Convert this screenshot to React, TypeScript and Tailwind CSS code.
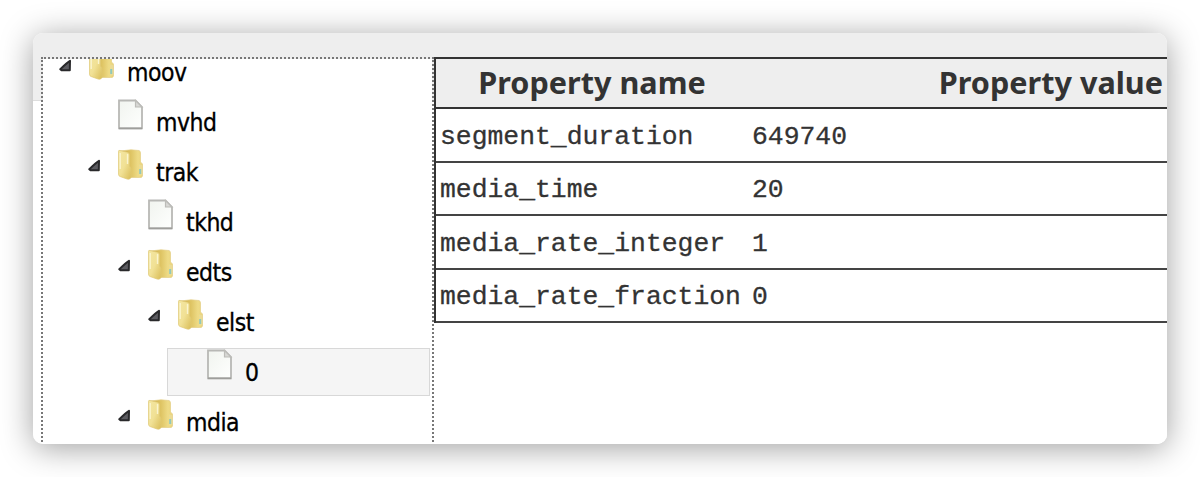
type Node = { name: string; indent: string; kind: 'folder' | 'file'; selected?: boolean };

const nodes: Node[] = [
  { name: 'moov', indent: 'pl-[16px]', kind: 'folder' },
  { name: 'mvhd', indent: 'pl-[45px]', kind: 'file' },
  { name: 'trak', indent: 'pl-[45px]', kind: 'folder' },
  { name: 'tkhd', indent: 'pl-[75px]', kind: 'file' },
  { name: 'edts', indent: 'pl-[75px]', kind: 'folder' },
  { name: 'elst', indent: 'pl-[105px]', kind: 'folder' },
  { name: '0', indent: 'pl-[9px]', kind: 'file', selected: true },
  { name: 'mdia', indent: 'pl-[75px]', kind: 'folder' },
];

const properties = [
  { name: 'segment_duration', value: '649740' },
  { name: 'media_time', value: '20' },
  { name: 'media_rate_integer', value: '1' },
  { name: 'media_rate_fraction', value: '0' },
];

function Arrow() {
  return (
    <svg width="13" height="13" viewBox="0 0 13 13" className="mt-[10px] shrink-0">
      <path d="M11 1.8Q8 3.5 1.3 10.2L2.5 11.2H10.8Z" fill="#5c5c61" stroke="#29292b" strokeWidth="2" strokeLinejoin="round" />
    </svg>
  );
}

function Folder() {
  return (
    <svg width="27" height="31" viewBox="0 0 27 31" className="shrink-0">
      <defs>
        <linearGradient id="front" x1="0" x2="1" y2="1">
          <stop offset="0" stopColor="#f3e6a2" />
          <stop offset=".5" stopColor="#f1e195" />
          <stop offset="1" stopColor="#d9bd58" />
        </linearGradient>
        <linearGradient id="back" x2="1">
          <stop offset="0" stopColor="#c8a842" />
          <stop offset=".5" stopColor="#dfc565" />
          <stop offset=".8" stopColor="#eedb86" />
          <stop offset="1" stopColor="#e9d37b" />
        </linearGradient>
      </defs>
      <path d="M3 2 14 .8 22 1.5Q23.5 2 23.5 4V13L25.5 15V27Q25 29 22.5 28.5L12 28.5Z" fill="url(#back)" stroke="#e4cf85" strokeWidth=".7" />
      <path d="M22 15.5 25 16V26L22 27Z" fill="#eadb95" />
      <path d="M23.2 20V25" stroke="#91c9bb" strokeWidth="2" />
      <path d="M1.5 2.2Q1.5 1 3 1.5L10.5 3.3Q12.5 4 12.5 6V17L14 19V28.5Q13 31 10 30L3 27.5Q1.5 27 1.5 25Z" fill="url(#front)" stroke="#dfc976" strokeWidth=".7" />
      <path d="M3.2 4V20M10.5 5V15" stroke="#faf4ce" strokeWidth="1.4" />
    </svg>
  );
}

function FileIcon() {
  return (
    <svg width="27" height="31" viewBox="0 0 27 31" className="shrink-0">
      <defs>
        <linearGradient id="sheet" x2="1" y2="1">
          <stop offset="0" stopColor="#f1f4ef" />
          <stop offset="1" stopColor="#fefffe" />
        </linearGradient>
      </defs>
      <path d="M2 1.5H18.5L25 8V29.3H2Z" fill="url(#sheet)" stroke="#b8b8b5" strokeWidth="1.8" />
      <path d="M2 29.3H25" stroke="#9e9e9b" strokeWidth="1.7" />
      <path d="M18.5 1.5V8H25Z" fill="#d8d8d5" stroke="#bcbcb8" strokeWidth="1.2" />
    </svg>
  );
}

function TreeRow({ node }: { node: Node }) {
  const row = (
    <div className={`flex h-[50px] items-start ${node.indent}`}>
      {node.kind === 'folder' ? <Arrow /> : <span className="w-[13px] shrink-0" />}
      <span className="w-[16px] shrink-0" />
      {node.kind === 'folder' ? <Folder /> : <FileIcon />}
      <span className="ml-[12px] mt-[9px] text-[24.5px] leading-[30px] tracking-[-0.5px] text-black [-webkit-text-stroke:0.3px_black]">{node.name}</span>
    </div>
  );
  if (!node.selected) return row;
  return (
    <div className="-mt-px h-[51px]">
      <div className="ml-[124px] mr-[2px] h-[48px] border border-[#d8d8d8] bg-[#f5f5f5]">{row}</div>
    </div>
  );
}

export default function App() {
  return (
    <main className="h-[477px] w-[1200px] overflow-hidden bg-white pl-[33px] pt-[33px]">
      <div className="h-[411px] w-[1134px] rounded-[10px] shadow-[0_4px_32px_rgba(0,0,0,0.38)]">
        <div className="flex h-full w-full overflow-hidden rounded-[10px] bg-[linear-gradient(#eeeeee_67px,#dddddd_67px,#dddddd_68px,#ffffff_68px)] pl-[8px] pt-[24px]">
          <section className="h-[400px] w-[393px] shrink-0 overflow-hidden border-2 border-dotted border-[#777777] bg-white bg-clip-padding font-['DejaVu_Sans_Condensed','DejaVu_Sans',sans-serif] [font-stretch:condensed]">
            <div className="-mt-[10px]">
              {nodes.map((node) => (
                <TreeRow key={node.name} node={node} />
              ))}
            </div>
          </section>
          <section className="min-w-0 flex-1 overflow-hidden bg-white">
            <div className="border-l-2 border-[#333333]">
              <div className="flex h-[52px] items-center border-y-2 border-[#333333] bg-[#eeeeee] pb-[2px] font-['Noto_Sans',sans-serif] text-[30.6px] font-bold leading-none text-[#333333]">
                <span className="w-[312px] whitespace-nowrap text-center">Property name</span>
                <span className="ml-auto whitespace-nowrap pr-[4px]">Property value</span>
              </div>
              {properties.map((property) => (
                <div
                  key={property.name}
                  className="flex h-[53.5px] items-center border-b-2 border-[#444444] pl-[4px] pt-[4px] font-['Liberation_Mono',monospace] text-[26.4px] leading-none text-[#333333] [-webkit-text-stroke:0.3px_#333333]"
                >
                  <span className="w-[312px] shrink-0 whitespace-nowrap">{property.name}</span>
                  <span>{property.value}</span>
                </div>
              ))}
            </div>
          </section>
        </div>
      </div>
    </main>
  );
}
